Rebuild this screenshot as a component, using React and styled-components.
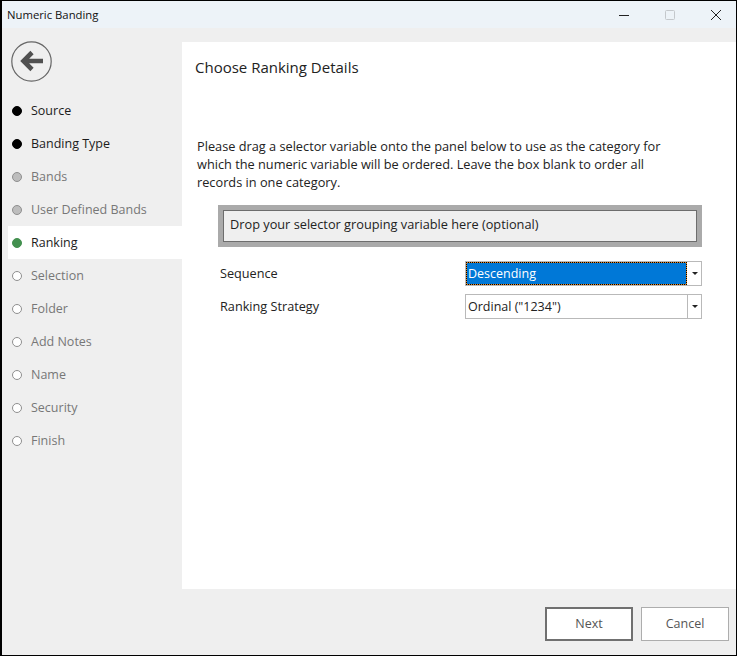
import React from 'react';
import styled, { createGlobalStyle } from 'styled-components';

const Global = createGlobalStyle`
  html, body { margin: 0; padding: 0; background: #fff; }
  body { font-family: "Open Sans", "Noto Sans", sans-serif; font-size: 12.5px; color: #222; }
`;

const steps = [
  { label: 'Source', state: 'done' },
  { label: 'Banding Type', state: 'done' },
  { label: 'Bands', state: 'skipped' },
  { label: 'User Defined Bands', state: 'skipped' },
  { label: 'Ranking', state: 'active' },
  { label: 'Selection', state: 'todo' },
  { label: 'Folder', state: 'todo' },
  { label: 'Add Notes', state: 'todo' },
  { label: 'Name', state: 'todo' },
  { label: 'Security', state: 'todo' },
  { label: 'Finish', state: 'todo' },
];

const dotColors = {
  done: 'background: #000; border-color: #000;',
  skipped: 'background: #bdbdbd; border-color: #8f8f8f;',
  active: 'background: #43904f; border-color: #43904f;',
  todo: 'background: #fff; border-color: #8f8f8f;',
};

const Window = styled.div`
  width: 737px;
  height: 656px;
  box-sizing: border-box;
  border: 1px solid #000;
  border-left-width: 2px;
  display: flex;
  flex-direction: column;
  background: #efefef;
  overflow: hidden;
`;

const TitleBar = styled.div`
  height: 27px;
  flex: none;
  display: flex;
  align-items: center;
  justify-content: space-between;
  padding-left: 5px;
  background: #edf3f8;
  font-size: 11.3px;
  color: #111;
`;

const WindowButtons = styled.div`
  display: flex;
  gap: 6px;
  height: 100%;
`;

const WindowButton = styled.div`
  width: 40px;
  display: flex;
  align-items: center;
  justify-content: center;
`;

const Body = styled.div`
  flex: 1;
  display: flex;
  min-height: 0;
`;

const Sidebar = styled.nav`
  width: 180px;
  flex: none;
  display: flex;
  flex-direction: column;
  padding: 13px 0 0 6px;
  box-sizing: border-box;
`;

const BackButton = styled.div`
  width: 41px;
  height: 41px;
  margin: 0 0 12px 3px;
`;

const Step = styled.div`
  height: 33px;
  display: flex;
  align-items: center;
  gap: 9px;
  padding-left: 4px;
  color: ${(p) => (p.$state === 'done' || p.$state === 'active' ? '#1c1c1c' : '#777')};
  background: ${(p) => (p.$state === 'active' ? '#fff' : 'transparent')};
`;

const Dot = styled.span`
  width: 10px;
  height: 10px;
  box-sizing: border-box;
  border-radius: 50%;
  border: 1.5px solid;
  ${(p) => dotColors[p.$state]}
`;

const Main = styled.div`
  flex: 1;
  display: flex;
  flex-direction: column;
  min-width: 0;
`;

const Panel = styled.section`
  flex: 1;
  margin-top: 14px;
  background: #fff;
  padding: 15px 34px 0 13px;
  display: flex;
  flex-direction: column;
`;

const Heading = styled.h1`
  margin: 0;
  font-size: 15px;
  line-height: 20px;
  font-weight: 400;
  color: #222;
`;

const Intro = styled.p`
  margin: 60px 0 0 2px;
  width: 490px;
  font-size: 12.75px;
  line-height: 18px;
  color: #222;
`;

const DropZone = styled.div`
  margin: 13.5px 0 0 23px;
  height: 42px;
  box-sizing: border-box;
  border: 5px solid #aaa;
  outline: 1.5px solid #6d6d6d;
  outline-offset: -6px;
  background: #efefef;
  display: flex;
  align-items: center;
  padding: 0 0 3px 7px;
  font-size: 12.75px;
`;

const Fields = styled.div`
  margin: 14px 0 0 25px;
  display: flex;
  flex-direction: column;
  gap: 8px;
`;

const FieldRow = styled.div`
  display: flex;
  align-items: center;
  justify-content: space-between;
  font-size: 12.7px;
`;

const Select = styled.div`
  width: 237px;
  height: 25px;
  box-sizing: border-box;
  border: 1px solid #b9b9b9;
  display: flex;
  background: #fff;
  font-size: 12.5px;
`;

const SelectValue = styled.div`
  flex: 1;
  display: flex;
  align-items: center;
  padding-left: 2px;
  ${(p) => p.$focused && `
    background: #0078d7;
    color: #fff;
    box-shadow: inset 0 0 0 1px #e8871e;
    outline: 1px dotted #000;
    outline-offset: -1px;
  `}
`;

const SelectArrow = styled.div`
  width: 13px;
  flex: none;
  display: flex;
  align-items: center;
  justify-content: center;
  border-left: 1px solid ${(p) => (p.$focused ? 'transparent' : '#b9b9b9')};

  &::after {
    content: '';
    border-left: 3px solid transparent;
    border-right: 3px solid transparent;
    border-top: 3px solid #222;
  }
`;

const Footer = styled.footer`
  height: 66px;
  flex: none;
  display: flex;
  justify-content: flex-end;
  gap: 8px;
  padding: 18px 7px 0 0;
  box-sizing: border-box;
`;

const Button = styled.button`
  width: 88px;
  height: 34px;
  box-sizing: border-box;
  background: #fff;
  border: ${(p) => (p.$primary ? '2px solid #707070' : '1px solid #adadad')};
  font: inherit;
  color: #555;
  padding: 0 0 2px;
`;

const App = () => {
  return (
    <>
      <Global />
      <Window>
        <TitleBar>
          Numeric Banding
          <WindowButtons>
            <WindowButton>
              <svg width="12" height="12" viewBox="0 0 12 12"><path d="M1 6.5h10" stroke="#222" /></svg>
            </WindowButton>
            <WindowButton>
              <svg width="12" height="12" viewBox="0 0 12 12"><rect x="1.5" y="1.5" width="9" height="9" rx="1" fill="none" stroke="#c4c8cc" /></svg>
            </WindowButton>
            <WindowButton>
              <svg width="12" height="12" viewBox="0 0 12 12"><path d="M1 1l10 10M11 1L1 11" stroke="#222" /></svg>
            </WindowButton>
          </WindowButtons>
        </TitleBar>
        <Body>
          <Sidebar>
            <BackButton>
              <svg width="41" height="41" viewBox="0 0 41 41">
                <circle cx="20.5" cy="20.5" r="19.7" fill="none" stroke="#666" strokeWidth="1.2" />
                <path d="M32 20H13M21 11.5L12.5 20L21 28.5" fill="none" stroke="#505050" strokeWidth="4.6" />
              </svg>
            </BackButton>
            {steps.map((step) => (
              <Step key={step.label} $state={step.state}>
                <Dot $state={step.state} />
                {step.label}
              </Step>
            ))}
          </Sidebar>
          <Main>
            <Panel>
              <Heading>Choose Ranking Details</Heading>
              <Intro>
                Please drag a selector variable onto the panel below to use as the category for
                which the numeric variable will be ordered. Leave the box blank to order all
                records in one category.
              </Intro>
              <DropZone>Drop your selector grouping variable here (optional)</DropZone>
              <Fields>
                <FieldRow>
                  Sequence
                  <Select>
                    <SelectValue $focused>Descending</SelectValue>
                    <SelectArrow $focused />
                  </Select>
                </FieldRow>
                <FieldRow>
                  Ranking Strategy
                  <Select>
                    <SelectValue>Ordinal ("1234")</SelectValue>
                    <SelectArrow />
                  </Select>
                </FieldRow>
              </Fields>
            </Panel>
          </Main>
        </Body>
        <Footer>
          <Button $primary>Next</Button>
          <Button>Cancel</Button>
        </Footer>
      </Window>
    </>
  );
};

export default App;
